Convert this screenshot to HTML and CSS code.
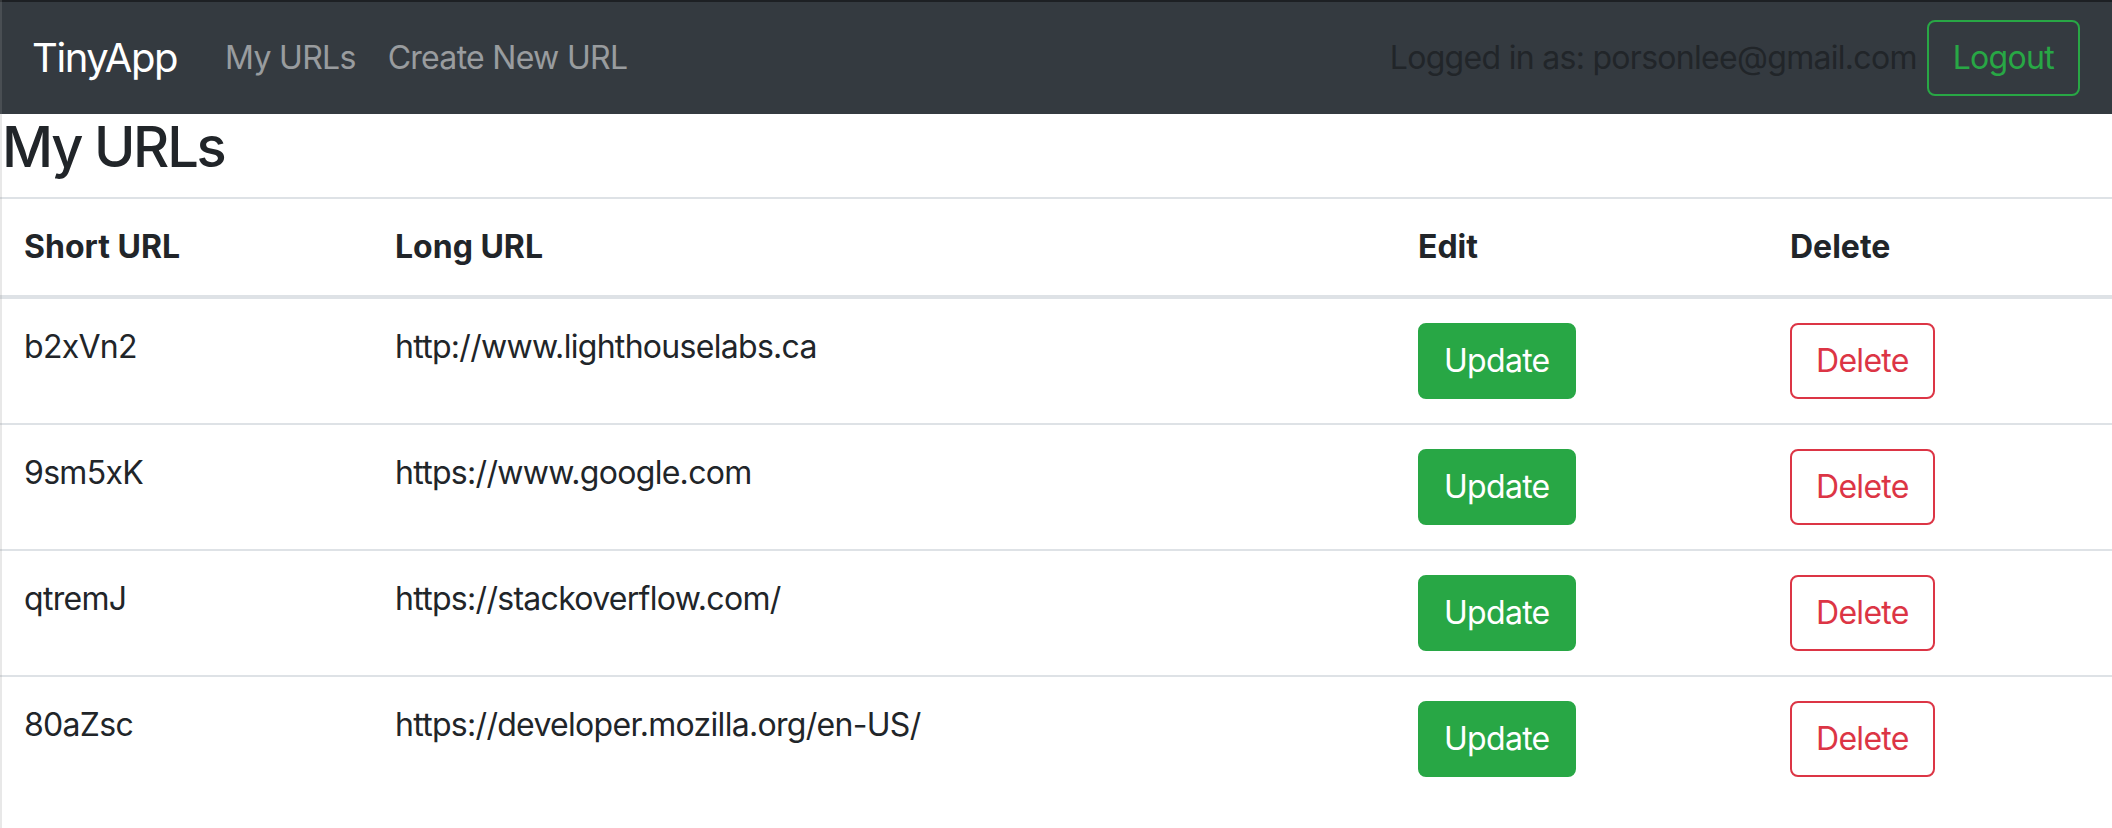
FILE: index.html
```html
<!DOCTYPE html>
<html lang="en">
<head>
<meta charset="utf-8">
<title>TinyApp</title>
<link rel="stylesheet" href="styles.css">
</head>
<body>
<div class="edge"></div>
<nav class="navbar">
  <a class="brand" href="#">TinyApp</a>
  <ul class="nav-links">
    <li><a class="nav-link" href="#">My URLs</a></li>
    <li><a class="nav-link" href="#">Create New URL</a></li>
  </ul>
  <div class="nav-right">
    <span class="login-text">Logged in as: porsonlee@gmail.com</span>
    <button class="btn btn-outline-success">Logout</button>
  </div>
</nav>
<main>
  <h3 class="page-title">My URLs</h3>
  <table class="table">
    <thead>
      <tr>
        <th class="c1">Short URL</th>
        <th class="c2">Long URL</th>
        <th class="c3">Edit</th>
        <th class="c4">Delete</th>
      </tr>
    </thead>
    <tbody>
      <tr>
        <td>b2xVn2</td>
        <td>http://www.lighthouselabs.ca</td>
        <td><button class="btn btn-success">Update</button></td>
        <td><button class="btn btn-outline-danger">Delete</button></td>
      </tr>
      <tr>
        <td>9sm5xK</td>
        <td>https://www.google.com</td>
        <td><button class="btn btn-success">Update</button></td>
        <td><button class="btn btn-outline-danger">Delete</button></td>
      </tr>
      <tr>
        <td>qtremJ</td>
        <td>https://stackoverflow.com/</td>
        <td><button class="btn btn-success">Update</button></td>
        <td><button class="btn btn-outline-danger">Delete</button></td>
      </tr>
      <tr>
        <td>80aZsc</td>
        <td>https://developer.mozilla.org/en-US/</td>
        <td><button class="btn btn-success">Update</button></td>
        <td><button class="btn btn-outline-danger">Delete</button></td>
      </tr>
    </tbody>
  </table>
</main>
</body>
</html>
```
FILE: styles.css
```css
* { box-sizing: border-box; }
html, body { margin: 0; padding: 0; }
body {
  font-family: Inter, "Liberation Sans", sans-serif;
  font-size: 32px;
  line-height: 1.5;
  letter-spacing: -0.022em;
  color: #212529;
  background: #fff;
}
.edge {
  position: fixed;
  left: 0; top: 0; bottom: 0;
  width: 2px;
  background: rgba(150, 150, 150, 0.22);
  z-index: 10;
}
.navbar {
  display: flex;
  align-items: center;
  background: #343a40;
  border-top: 2px solid #1d2024;
  padding: 16px 32px;
  height: 114px;
}
.brand {
  font-size: 40px;
  line-height: 60px;
  letter-spacing: -0.035em;
  padding: 10px 0;
  margin-right: 32px;
  color: #fff;
  text-decoration: none;
  white-space: nowrap;
}
.nav-links {
  display: flex;
  list-style: none;
  margin: 0;
  padding: 0;
}
.nav-link {
  display: block;
  padding: 16px;
  color: rgba(255, 255, 255, 0.5);
  text-decoration: none;
}
.nav-right {
  margin-left: auto;
  display: flex;
  align-items: center;
  gap: 10px;
}
.login-text { color: #212529; }
.btn {
  font-family: inherit;
  font-size: 32px;
  line-height: 48px;
  letter-spacing: -0.022em;
  padding: 12px 24px;
  border: 2px solid transparent;
  border-radius: 8px;
  background: transparent;
  cursor: pointer;
}
.btn-outline-success { color: #28a745; border-color: #28a745; }
.btn-success { color: #fff; background: #28a745; border-color: #28a745; }
.btn-outline-danger { color: #dc3545; border-color: #dc3545; background: #fff; }
.page-title {
  font-size: 56px;
  font-weight: 500;
  line-height: 1.2;
  letter-spacing: -0.04em;
  margin: 0 0 16px;
  padding-left: 2px;
}
.table {
  width: 100%;
  border-collapse: collapse;
}
.table th, .table td {
  padding: 24px;
  text-align: left;
  vertical-align: top;
  border-top: 2px solid #dee2e6;
}
.table thead th {
  border-bottom: 4px solid #dee2e6;
  font-weight: 700;
  letter-spacing: 0;
}
.c1 { width: 371px; }
.c2 { width: 1023px; }
.c3 { width: 372px; }
.c4 { width: 346px; }
```
